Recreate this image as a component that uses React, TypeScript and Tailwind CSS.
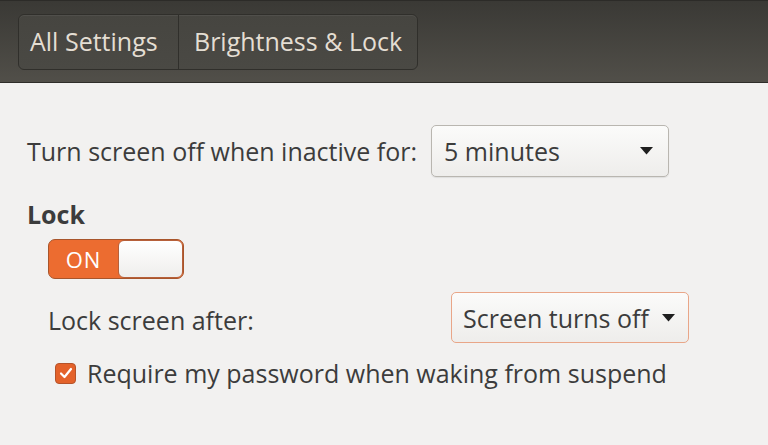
import { useState } from 'react';

function Caret() {
  return (
    <svg width="13" height="8" viewBox="0 0 13 8" className="shrink-0">
      <path d="M0 0 L13 0 L6.5 7.5 Z" fill="#1f1f1f" />
    </svg>
  );
}

export default function App() {
  const [lockOn, setLockOn] = useState(true);
  const [requirePw, setRequirePw] = useState(true);

  return (
    <div className="w-[768px] h-[445px] bg-[#f2f1f0] font-['Open_Sans',sans-serif] text-[#3c3c3c] overflow-hidden">
      <header className="h-[83px] bg-gradient-to-b from-[#3a3935] to-[#514f49] border-t border-[#2c2b28] border-b border-b-[#2e2d29] flex items-center px-[18px]">
        <div className="flex h-[56px] rounded-[6px] border border-[#302f2b] bg-gradient-to-b from-[#464540] to-[#4a4944] shadow-[inset_0_1px_0_rgba(255,255,255,0.06)] text-[#e4ded3] text-[25px]">
          <div className="w-[160px] flex items-center pl-[11px] border-r border-[#302f2b]">All Settings</div>
          <div className="w-[238px] flex items-center pl-[15px]">Brightness &amp; Lock</div>
        </div>
      </header>

      <main className="pl-[27px] pt-[42px] text-[25px] leading-[30px]">
        <div className="flex items-center gap-[14px]">
          <span>Turn screen off when inactive for:</span>
          <button className="w-[238px] h-[52px] rounded-[5px] border border-[#b9b6b0] bg-gradient-to-b from-[#fbfbfa] to-[#eeedeb] shadow-[0_1px_1px_rgba(0,0,0,0.08)] flex items-center justify-between pl-[12px] pr-[15px] text-[#3c3c3c]">
            <span>5 minutes</span>
            <Caret />
          </button>
        </div>

        <div className="mt-[22px] font-bold text-[#3c3c3c]">Lock</div>

        <div className="mt-[10px] pl-[21px]">
          <button
            onClick={() => setLockOn(!lockOn)}
            className="w-[136px] h-[40px] rounded-[7px] border border-[#a8552b] bg-[#ec6c30] flex items-stretch overflow-hidden"
          >
            <span className="w-[69px] flex items-center justify-center text-white text-[22px] tracking-[1px]">ON</span>
            <span className="flex-1 rounded-[6px] border border-[#b6603a] bg-gradient-to-b from-[#ffffff] to-[#efeeec]" />
          </button>
        </div>

        <div className="mt-[13px] pl-[21px] flex items-center pr-[79px]">
          <span className="flex-1 pt-[4px]">Lock screen after:</span>
          <button className="w-[238px] h-[51px] rounded-[5px] border border-[#e9a688] bg-gradient-to-b from-[#fbfbfa] to-[#eeedeb] flex items-center justify-between pl-[11px] pr-[13px] text-[#3c3c3c]">
            <span>Screen turns off</span>
            <Caret />
          </button>
        </div>

        <label className="mt-[15px] pl-[28px] flex items-center gap-[11px] cursor-pointer">
          <span
            onClick={() => setRequirePw(!requirePw)}
            className="w-[21px] h-[21px] rounded-[4px] bg-[#e4622a] border border-[#b5532a] flex items-center justify-center"
          >
            {requirePw && (
              <svg width="14" height="12" viewBox="0 0 14 12">
                <path d="M2 6.5 L5.5 10 L12 2" stroke="#fff" strokeWidth="2.2" fill="none" strokeLinecap="round" strokeLinejoin="round" />
              </svg>
            )}
          </span>
          <span>Require my password when waking from suspend</span>
        </label>
      </main>
    </div>
  );
}
